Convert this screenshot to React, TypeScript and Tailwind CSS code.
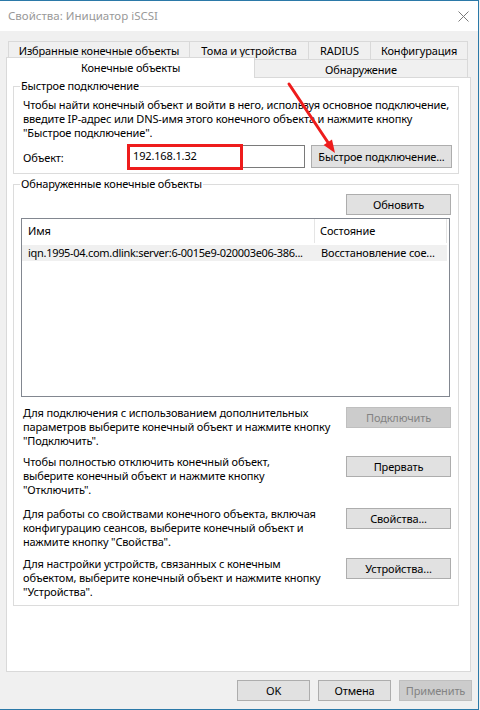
const btn =
  "flex h-[21px] items-center justify-center whitespace-nowrap border border-[#adadad] bg-[#e1e1e1] leading-none text-black";
const btnDisabled =
  "flex h-[21px] items-center justify-center whitespace-nowrap border border-[#bfbfbf] bg-[#cccccc] leading-none text-[#838383]";

function Hint({ lines, button, disabled, className }: { lines: string[]; button: string; disabled?: boolean; className: string }) {
  return (
    <div className={"flex items-start justify-between pl-[9px] pr-[7px] " + className}>
      <p className="-mt-[1px] leading-[14px]">
        {lines.map((l, i) => (
          <span key={i} className="block whitespace-nowrap">
            {l}
          </span>
        ))}
      </p>
      <div className={(disabled ? btnDisabled : btn) + " w-[105px] shrink-0"}>{button}</div>
    </div>
  );
}

export default function App() {
  return (
    <div className="relative h-[710px] w-[480px] overflow-hidden bg-[#f0f0f0] font-['Noto_Sans',sans-serif] text-[11px] tracking-[-0.15px] text-black">
      <div className="flex h-[710px] w-[479px] flex-col border-t border-r border-b border-[#2b79a8]">
        {/* title bar */}
        <div className="flex h-[30px] items-center justify-between bg-white pl-[8px] pr-[9px]">
          <span className="text-[11.5px] tracking-normal text-[#999999]">Свойства: Инициатор iSCSI</span>
          <svg width="11" height="11" viewBox="0 0 11 11">
            <path d="M0.5 0.5L10.5 10.5M10.5 0.5L0.5 10.5" stroke="#7a7a7a" strokeWidth="1" fill="none" />
          </svg>
        </div>

        {/* tabs row 1 */}
        <div className="mt-[10px] ml-[8px] flex h-[18px]">
          <div className="flex w-[181px] items-center justify-center border-t border-l border-[#d9d9d9] leading-none">Избранные конечные объекты</div>
          <div className="flex w-[119px] items-center justify-center border-t border-l border-[#d9d9d9] leading-none">Тома и устройства</div>
          <div className="flex w-[62px] items-center justify-center border-t border-l border-[#d9d9d9] leading-none">RADIUS</div>
          <div className="flex w-[98px] items-center justify-center border-t border-l border-r border-[#d9d9d9] leading-none">Конфигурация</div>
        </div>
        {/* tabs row 2 */}
        <div className="-mt-[2px] ml-[6px] flex h-[20px] items-end">
          <div className="relative z-10 -mb-px flex h-[21px] w-[249px] items-center justify-center border-t border-l border-r border-[#d9d9d9] bg-white pb-[2px] leading-none">
            Конечные объекты
          </div>
          <div className="flex h-[18px] w-[213px] items-center justify-center border-t border-r border-[#d9d9d9] pt-[1px] leading-none">Обнаружение</div>
        </div>

        {/* panel */}
        <div className="ml-[6px] h-[595px] w-[465px] border border-[#d9d9d9] bg-white px-[6px]">
          <fieldset className="mt-[1px] w-[446px] min-w-0 border border-[#dcdcdc] pb-[5px]">
            <legend className="ml-[6px] px-[1px] leading-[14px]">Быстрое подключение</legend>
            <div className="pl-[9px]">
              <p className="mt-[5px] whitespace-nowrap leading-[14px]">
                Чтобы найти конечный объект и войти в него, используя основное подключение,
                <br />
                введите IP-адрес или DNS-имя этого конечного объекта и нажмите кнопку
                <br />
                "Быстрое подключение".
              </p>
              <div className="mt-[5px] flex items-center">
                <span className="w-[104px] pt-[3px]">Объект:</span>
                <div className="relative flex h-[23px] w-[178px] items-center border border-[#7a7a7a] pl-[5px]">
                  <span>192.168.1.32</span>
                  <div className="absolute -top-[2px] -left-px h-[26px] w-[116px] border-[3px] border-[#ee1c1c]" />
                </div>
                <div className={btn + " ml-[6px] h-[23px] w-[141px]"}>Быстрое подключение...</div>
              </div>
            </div>
          </fieldset>

          <fieldset className="mt-[3px] w-[446px] min-w-0 border border-[#dcdcdc] pb-[6px]">
            <legend className="ml-[6px] px-[1px] leading-[14px]">Обнаруженные конечные объекты</legend>
            <div className="mt-[3px] flex justify-end pr-[7px]">
              <div className={btn + " w-[105px]"}>Обновить</div>
            </div>
            <div className="mt-[3px] ml-[7px] h-[179px] w-[429px] border border-[#828790]">
              <div className="flex h-[24px] items-center">
                <div className="flex h-full w-[293px] items-center border-r border-[#e5e5e5] pl-[6px]">Имя</div>
                <div className="flex h-full w-[132px] items-center border-r border-[#e5e5e5] pl-[5px]">Состояние</div>
              </div>
              <div className="mt-[2px] flex h-[16px] w-[425px] items-center bg-[#f0f0f0]">
                <div className="w-[293px] whitespace-nowrap pl-[6px] tracking-[-0.3px]">iqn.1995-04.com.dlink:server:6-0015e9-020003e06-386...</div>
                <div className="w-[132px] whitespace-nowrap pl-[6px]">Восстановление сое...</div>
              </div>
            </div>

            <Hint
              className="mt-[10px]"
              lines={["Для подключения с использованием дополнительных", "параметров выберите конечный объект и нажмите кнопку", '"Подключить".']}
              button="Подключить"
              disabled
            />
            <Hint
              className="mt-[8px]"
              lines={["Чтобы полностью отключить конечный объект,", "выберите конечный объект и нажмите кнопку", '"Отключить".']}
              button="Прервать"
            />
            <Hint
              className="mt-[11px]"
              lines={["Для работы со свойствами конечного объекта, включая", "конфигурацию сеансов, выберите конечный объект и", 'нажмите кнопку "Свойства".']}
              button="Свойства..."
            />
            <Hint
              className="mt-[9px]"
              lines={["Для настройки устройств, связанных с конечным", "объектом, выберите конечный объект и нажмите кнопку", '"Устройства".']}
              button="Устройства..."
            />
          </fieldset>
        </div>

        {/* dialog buttons */}
        <div className="mt-[8px] flex justify-end gap-[8px] pr-[6px]">
          <div className={btn + " w-[73px]"}>OK</div>
          <div className={btn + " w-[73px]"}>Отмена</div>
          <div className={btnDisabled + " w-[73px]"}>Применить</div>
        </div>
      </div>

      {/* annotation arrow */}
      <svg className="pointer-events-none absolute top-0 left-0" width="480" height="710" viewBox="0 0 480 710">
        <line x1="289" y1="84" x2="329" y2="144" stroke="#ee1c1c" strokeWidth="3" strokeLinecap="round" />
        <polygon points="335,153 332,139.4 323.6,145" fill="#ee1c1c" />
      </svg>
    </div>
  );
}
